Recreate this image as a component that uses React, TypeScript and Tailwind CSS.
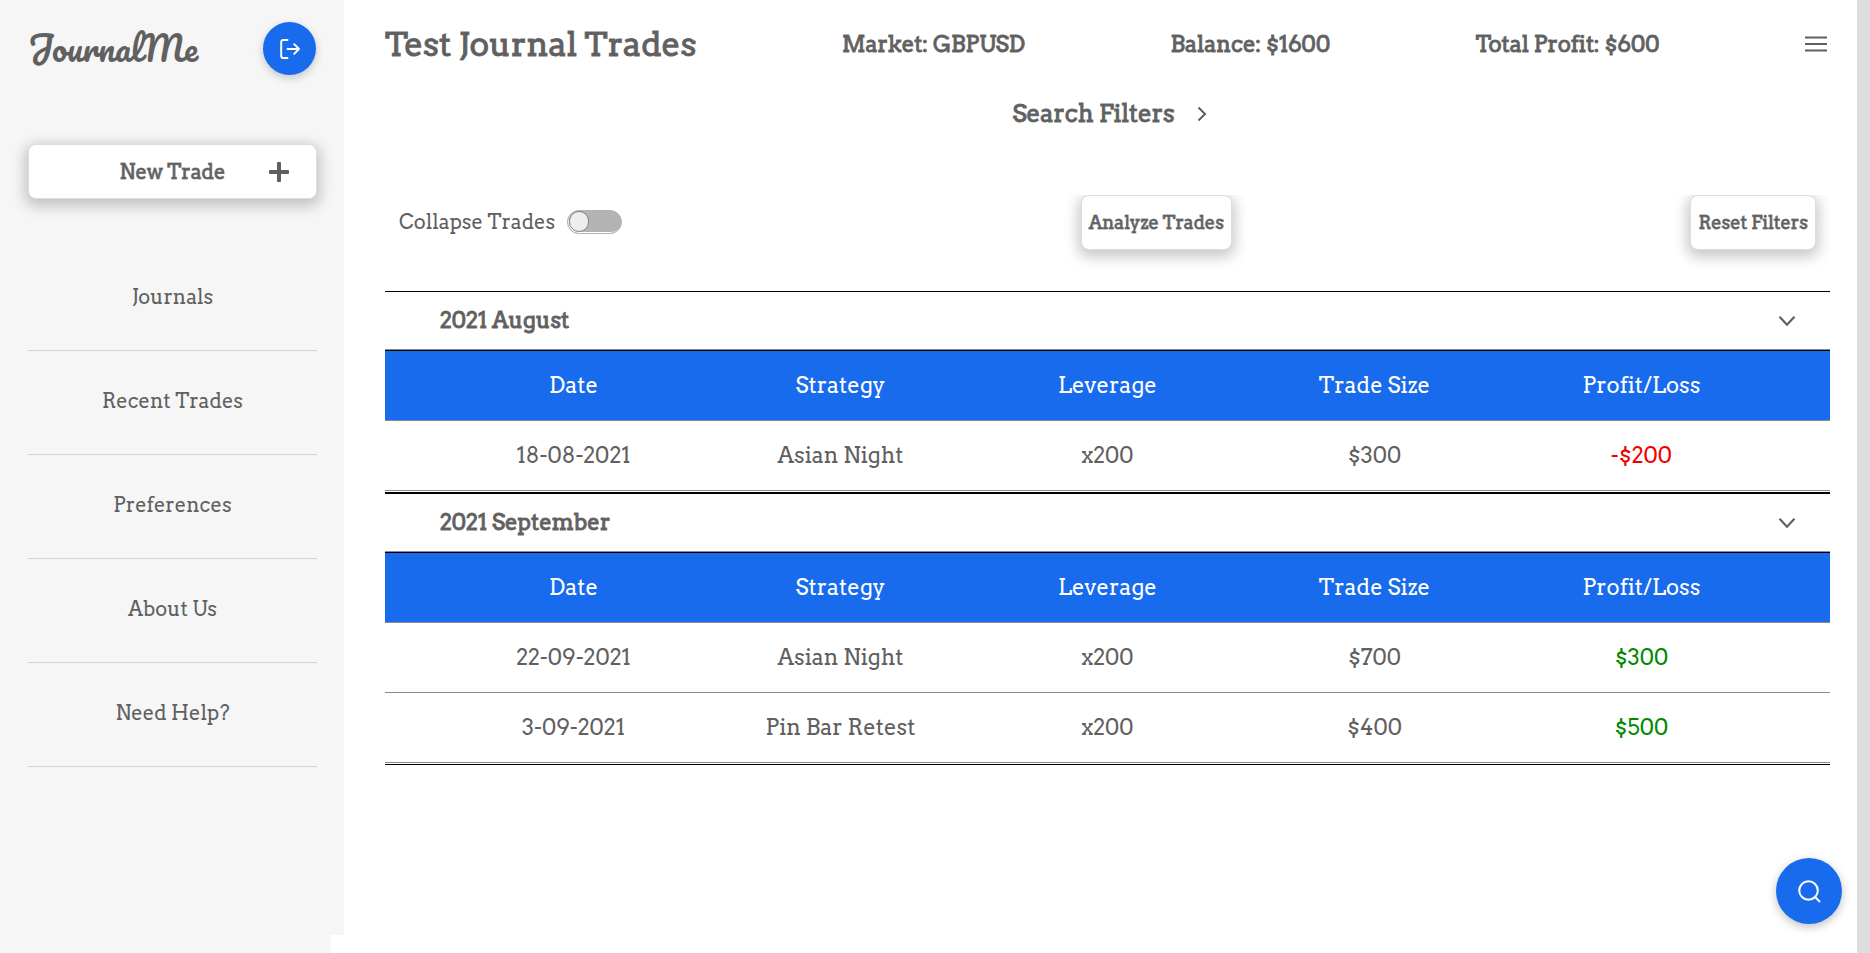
import React, { useState } from "react";

type Trade = { date: string; strategy: string; leverage: string; size: string; profit: number };
type Month = { title: string; trades: Trade[] };

const months: Month[] = [
  {
    title: "2021 August",
    trades: [{ date: "18-08-2021", strategy: "Asian Night", leverage: "x200", size: "$300", profit: -200 }],
  },
  {
    title: "2021 September",
    trades: [
      { date: "22-09-2021", strategy: "Asian Night", leverage: "x200", size: "$700", profit: 300 },
      { date: "3-09-2021", strategy: "Pin Bar Retest", leverage: "x200", size: "$400", profit: 500 },
    ],
  },
];

const links = ["Journals", "Recent Trades", "Preferences", "About Us", "Need Help?"];
const columns = ["Date", "Strategy", "Leverage", "Trade Size", "Profit/Loss"];

const strong = "font-normal [-webkit-text-stroke:1px_#606060e6]";
const medium = "font-normal [-webkit-text-stroke:1px_#606060b3]";
const raised = "rounded-lg border border-[#dedede] bg-white shadow-[0_4px_14px_3px_rgba(0,0,0,0.22)]";

function LogoutIcon() {
  return (
    <svg width="20" height="20" viewBox="0 0 20 20" fill="none" stroke="currentColor" strokeWidth="1.9" strokeLinecap="round" strokeLinejoin="round" aria-hidden="true">
      <path d="M7.500 1H3.200Q1.200 1 1.200 3v14q0 2 2 2h4.300" />
      <path d="M7.500 10H19M14.200 5.200 19 10l-4.800 4.800" />
    </svg>
  );
}

function PlusIcon() {
  return (
    <svg width="20" height="20" viewBox="0 0 20 20" fill="currentColor" aria-hidden="true">
      <rect x="8" y="0" width="4" height="20" rx="1" />
      <rect x="0" y="8" width="20" height="4" rx="1" />
    </svg>
  );
}

function Sidebar() {
  return (
    <aside className="flex w-[344px] shrink-0 flex-col">
      <div className="flex-1 bg-[#f6f6f6] pr-[27px] pl-7">
        <div className="flex items-start justify-between pt-[22px]">
          <a href="#home" className="font-['Pacifico','Liberation_Serif',cursive] text-[34px] leading-[51px]">JournalMe</a>
          <button aria-label="Log out" className="mr-px grid size-[53px] place-items-center rounded-full bg-[#186bed] text-white shadow-[0_3px_8px_rgba(0,0,0,0.2)]">
            <LogoutIcon />
          </button>
        </div>
        <button className={`relative mt-[69px] grid h-[55px] w-full place-items-center text-[20px] ${medium} ${raised}`}>
          New Trade
          <span className="absolute inset-y-0 right-[27px] grid place-items-center"><PlusIcon /></span>
        </button>
        <nav className="mt-12">
          {links.map((label) => (
            <a key={label} href="#" className="grid h-[104px] place-items-center border-b border-[#d4d4d4] pb-[3px] text-[20px]">{label}</a>
          ))}
        </nav>
      </div>
      <div className="mr-[13px] h-[18px] bg-[#f6f6f6]" />
    </aside>
  );
}

function MonthSection({ month, collapsed }: { month: Month; collapsed: boolean }) {
  const [open, setOpen] = useState(true);
  return (
    <section className="border-y border-black">
      <button
        onClick={() => setOpen(!open)}
        aria-expanded={open}
        className="flex h-[58px] w-full items-center justify-between border-b border-[#8c8c8c] pr-[34px] pl-[55px]"
      >
        <span className={`text-[22px] ${strong}`}>{month.title}</span>
        <svg width="18" height="12" viewBox="0 0 18 12" fill="none" stroke="currentColor" strokeWidth="2.2" aria-hidden="true">
          <path d="m1.500 1.700 7.500 8 7.500-8" />
        </svg>
      </button>
      {open && !collapsed && (
        <table className="mb-px block border-t border-black text-[22px]">
          <thead className="block">
            <tr className="flex h-[70px] items-center border-b border-[#8c8c8c] bg-[#186bed] px-[55px] text-white">
              {columns.map((c) => (
                <th key={c} scope="col" className="flex-1 text-center font-normal">{c}</th>
              ))}
            </tr>
          </thead>
          <tbody className="block">
            {month.trades.map((t) => (
              <tr key={t.date} className="flex h-[70px] items-center border-b border-[#8c8c8c] px-[55px] text-center">
                <td className="flex-1">{t.date}</td>
                <td className="flex-1">{t.strategy}</td>
                <td className="flex-1">{t.leverage}</td>
                <td className="flex-1">{t.size}</td>
                <td className={t.profit < 0 ? "flex-1 text-[#f00000]" : "flex-1 text-[#008a00]"}>
                  {t.profit < 0 ? `-$${-t.profit}` : `$${t.profit}`}
                </td>
              </tr>
            ))}
          </tbody>
        </table>
      )}
    </section>
  );
}

export default function App() {
  const [collapsed, setCollapsed] = useState(false);
  return (
    <div className="flex min-h-screen bg-white font-['Arvo','DejaVu_Serif_Condensed','Liberation_Serif',serif] text-[#606060]">
      <Sidebar />
      <main className="min-w-0 flex-1 pr-[27px] pl-[41px]">
        <header className={`flex h-[88px] items-center justify-between text-[22px] ${strong}`}>
          <h1 className="pt-[2px] text-[33px]">Test Journal Trades</h1>
          <p>Market: GBPUSD</p>
          <p>Balance: $1600</p>
          <p>Total Profit: $600</p>
          <button aria-label="Menu" className="pr-[3px]">
            <svg width="22" height="18" viewBox="0 0 22 18" fill="none" stroke="currentColor" strokeWidth="2.2" aria-hidden="true">
              <path d="M0 2.500h22M0 9h22M0 15.500h22" />
            </svg>
          </button>
        </header>
        <div className="flex h-[107px] items-start justify-center pt-2">
          <button className="flex items-center gap-[22px] pl-1">
            <span className={`text-[24px] ${strong}`}>Search Filters</span>
            <svg width="10" height="16" viewBox="0 0 10 16" fill="none" stroke="currentColor" strokeWidth="2" aria-hidden="true">
              <path d="m1.500 1.500 6.500 6.500-6.500 6.500" />
            </svg>
          </button>
        </div>
        <div className="flex h-24 items-start justify-between overflow-hidden px-[14px]">
          <label className="flex h-[54px] items-center gap-3 text-[20px]">
            Collapse Trades
            <input
              type="checkbox"
              role="switch"
              checked={collapsed}
              onChange={(e) => setCollapsed(e.target.checked)}
              className="flex h-6 w-[55px] appearance-none items-start rounded-full border border-[#b3b3b3] bg-[#b3b3b3] shadow-[inset_1px_-1px_0_white] before:ml-px before:h-[21px] before:w-5 before:rounded-full before:border before:border-[#858585] before:bg-[#eeeeee] before:content-[''] checked:justify-end"
            />
          </label>
          <button className={`h-[55px] px-[7px] text-[18px] ${medium} ${raised}`}>Analyze Trades</button>
          <button className={`h-[55px] px-[7px] text-[18px] ${medium} ${raised}`}>Reset Filters</button>
        </div>
        {months.map((m) => (
          <MonthSection key={m.title} month={m} collapsed={collapsed} />
        ))}
      </main>
      <div className="w-[13px] shrink-0 bg-[#dedede]" />
      <button aria-label="Search" className="fixed right-7 bottom-[29px] grid size-[66px] place-items-center rounded-full bg-[#186bed] text-white shadow-[0_3px_10px_rgba(0,0,0,0.25)]">
        <svg width="23" height="23" viewBox="0 0 23 23" fill="none" stroke="currentColor" strokeWidth="2" aria-hidden="true">
          <circle cx="10.500" cy="10.500" r="9.300" />
          <path d="m16.800 16.800 5.200 5.200" />
        </svg>
      </button>
    </div>
  );
}
